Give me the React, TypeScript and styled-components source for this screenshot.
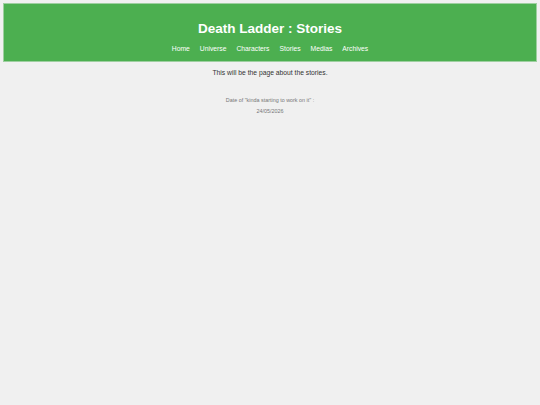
import styled, { createGlobalStyle } from 'styled-components';

const GlobalStyle = createGlobalStyle`
  html, body {
    margin: 0;
    padding: 0;
    background: #f0f0f0;
    font-family: "Liberation Sans", Arial, sans-serif;
  }
  body {
    padding: 3px;
    min-height: 100vh;
    box-sizing: border-box;
  }
`;

const Header = styled.header`
  background: #4caf50;
  border: 1px solid #9ecfa0;
  padding: 16.5px 0 8px;
  display: flex;
  flex-direction: column;
  align-items: center;
  gap: 7.5px;
  color: #fff;
`;

const Title = styled.h1`
  margin: 0;
  font-size: 13.5px;
  line-height: 16px;
  font-weight: 700;
`;

const Nav = styled.nav`
  display: flex;
  gap: 10px;
`;

const NavLink = styled.a`
  color: #fff;
  text-decoration: none;
  font-size: 6.75px;
  line-height: 9px;
`;

const Main = styled.main`
  display: flex;
  flex-direction: column;
  align-items: center;
  padding-top: 6px;
`;

const Intro = styled.p`
  margin: 0;
  font-size: 6.75px;
  line-height: 9px;
  color: #333;
`;

const Note = styled.p<{ $gap: number }>`
  margin: ${(p) => p.$gap}px 0 0;
  font-size: 5.4px;
  line-height: 7px;
  color: #777;
`;

const links = ['Home', 'Universe', 'Characters', 'Stories', 'Medias', 'Archives'];

export default function App() {
  return (
    <>
      <GlobalStyle />
      <Header>
        <Title>Death Ladder : Stories</Title>
        <Nav>
          {links.map((l) => (
            <NavLink key={l} href="#">
              {l}
            </NavLink>
          ))}
        </Nav>
      </Header>
      <Main>
        <Intro>This will be the page about the stories.</Intro>
        <Note $gap={20}>Date of "kinda starting to work on it" :</Note>
        <Note $gap={4}>24/05/2026</Note>
      </Main>
    </>
  );
}
